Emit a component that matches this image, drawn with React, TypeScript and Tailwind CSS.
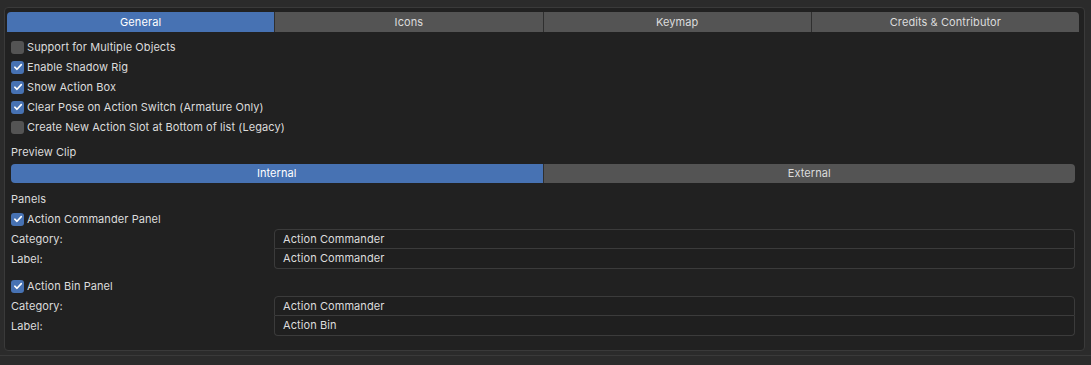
import React from "react";

const tabs = ["General", "Icons", "Keymap", "Credits & Contributor"];

const CheckBox = ({ on }: { on: boolean }) => (
  <div
    className={`w-[13px] h-[13px] rounded-[3px] flex items-center justify-center shrink-0 ${
      on ? "bg-[#4772b3]" : "bg-[#545454]"
    }`}
  >
    {on && (
      <svg width="10" height="10" viewBox="0 0 10 10">
        <path d="M1.8 5.2 L4 7.3 L8.3 2.6" fill="none" stroke="#fff" strokeWidth="1.6" strokeLinecap="round" strokeLinejoin="round" />
      </svg>
    )}
  </div>
);

const CheckRow = ({ on, label }: { on: boolean; label: string }) => (
  <div className="h-[20px] flex items-center gap-[3px]">
    <CheckBox on={on} />
    <span>{label}</span>
  </div>
);

/* label : text field pair */
const FieldGroup = ({ rows }: { rows: [string, string][] }) => (
  <div className="flex flex-col">
    {rows.map(([k, v], i) => (
      <div key={k} className="h-[20px] flex items-center">
        <div className="w-[263px] shrink-0">{k}</div>
        <div
          className={`flex-1 h-full flex items-center pl-[8px] border-x border-[#3b3b3b] bg-[#1f1f1f] ${
            i === 0 ? "border-t rounded-t-[4px] border-b" : "border-b rounded-b-[4px]"
          }`}
        >
          {v}
        </div>
      </div>
    ))}
  </div>
);

export default function App() {
  return (
    <div
      className="w-[1091px] h-[365px] bg-[#2b2b2b] pt-[7px] pl-[4px] text-[11px] tracking-[0.08px] text-[#dcdcdc]"
      style={{ fontFamily: "Inter, 'Noto Sans', sans-serif" }}
    >
      <div className="w-[1081px] h-[344px] border border-[#3a3a3a] rounded-[4px] bg-[#212121] px-[1px] pt-[4px]">
        {/* tabs */}
        <div className="flex ml-[1px] w-[1072px] h-[20px] rounded-t-[4px] overflow-hidden">
          {tabs.map((t, i) => (
            <div
              key={t}
              className={`flex-1 flex items-center justify-center ${
                i === 0 ? "bg-[#4772b3] text-white" : "bg-[#545454] border-l border-[#2f2f2f]"
              }`}
            >
              {t}
            </div>
          ))}
        </div>

        <div className="pl-[5px] pr-[5px] pt-[5px]">
          <CheckRow on={false} label="Support for Multiple Objects" />
          <CheckRow on={true} label="Enable Shadow Rig" />
          <CheckRow on={true} label="Show Action Box" />
          <CheckRow on={true} label="Clear Pose on Action Switch (Armature Only)" />
          <CheckRow on={false} label="Create New Action Slot at Bottom of list (Legacy)" />

          <div className="h-[20px] flex items-center mt-[7px] pb-[4px]">Preview Clip</div>
          <div className="flex w-[1064px] h-[19px] rounded-[4px] overflow-hidden">
            <div className="flex-1 bg-[#4772b3] text-white flex items-center justify-center">Internal</div>
            <div className="flex-1 bg-[#545454] border-l border-[#2f2f2f] flex items-center justify-center">External</div>
          </div>

          <div className="h-[20px] flex items-center mt-[6px]">Panels</div>
          <div className="w-[1064px]">
            <CheckRow on={true} label="Action Commander Panel" />
            <FieldGroup rows={[["Category:", "Action Commander"], ["Label:", "Action Commander"]]} />
            <div className="mt-[7px]">
              <CheckRow on={true} label="Action Bin Panel" />
            </div>
            <FieldGroup rows={[["Category:", "Action Commander"], ["Label:", "Action Bin"]]} />
          </div>
        </div>
      </div>
      <div className="-ml-[4px] mt-[4px] w-[1091px] border-t border-[#3a3a3a]" />
    </div>
  );
}
